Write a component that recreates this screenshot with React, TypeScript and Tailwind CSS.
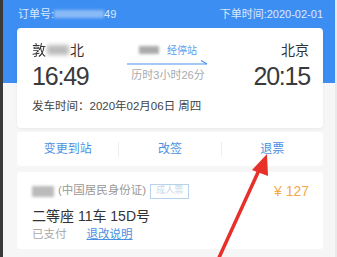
import React from "react";

const font = { fontFamily: '"Liberation Sans", "Noto Sans CJK SC", sans-serif' };

export default function App() {
  return (
    <div className="relative w-[337px] h-[257px] overflow-hidden flex bg-[#f6f6f6]" style={font}>
      <div className="w-[3px] h-full bg-[#3a3a3a]" />
      <div className="w-[332px] h-full pl-[14px] pr-[12px] bg-[linear-gradient(#3d8ef2_83px,#f6f6f6_83px)]">
        {/* header */}
        <div className="h-[28px] flex items-center justify-between text-[11px] text-white/80 pl-[1px]">
          <div className="flex items-center">
            <span>订单号:</span>
            <span className="inline-block w-[50px] h-[8px] bg-white/40 blur-[1.5px]" />
            <span>49</span>
          </div>
          <span>下单时间:2020-02-01</span>
        </div>
        {/* train card */}
        <div className="h-[100px] bg-white rounded-[4px] shadow-[0_1px_3px_rgba(0,0,0,0.06)] pl-[15px] pr-[13px] pt-[13px] flex flex-col">
          <div className="flex justify-between items-start">
            <div className="flex flex-col">
              <div className="h-[18px] flex items-center text-[14px] text-[#333]">
                <span className="blur-[0.6px]">敦</span>
                <span className="inline-block w-[22px] h-[10px] bg-[#bbb] blur-[2px] mx-[1px]" />
                <span>北</span>
              </div>
              <div className="text-[25px] leading-[26px] tracking-[-1.2px] text-[#3a3a3a] mt-[4px]">16:49</div>
            </div>
            <div className="flex flex-col items-center w-[84px] mr-[6px] mt-[1px]">
              <div className="h-[16px] flex items-center gap-[8px]">
                <span className="inline-block w-[20px] h-[8px] bg-[#aaa] blur-[1.5px]" />
                <span className="text-[10px] text-[#5aa0f0]">经停站</span>
              </div>
              <svg width="82" height="6" viewBox="0 0 82 6" className="mt-[1px]">
                <line x1="0" y1="5" x2="80" y2="5" stroke="#4a93ee" strokeWidth="1.2" />
                <line x1="74" y1="1.5" x2="80" y2="5" stroke="#4a93ee" strokeWidth="1.2" />
              </svg>
              <div className="text-[11px] text-[#aaa] mt-[2px]">历时3小时26分</div>
            </div>
            <div className="flex flex-col items-end">
              <div className="h-[18px] flex items-center text-[14px] text-[#333] pr-[1px]">北京</div>
              <div className="text-[25px] leading-[26px] tracking-[-1.2px] text-[#3a3a3a] mt-[4px]">20:15</div>
            </div>
          </div>
          <div className="text-[11.5px] text-[#444] mt-[9px]">发车时间：2020年02月06日 周四</div>
        </div>
        {/* actions */}
        <div className="mt-[4px] h-[34px] bg-white rounded-[3px] flex items-center text-[12px] text-[#4a90e2]">
          <div className="flex-1 text-center">变更到站</div>
          <div className="w-px h-[15px] bg-[#eee]" />
          <div className="flex-1 text-center">改签</div>
          <div className="w-px h-[15px] bg-[#eee]" />
          <div className="flex-1 text-center">退票</div>
        </div>
        {/* passenger */}
        <div className="mt-[6px] h-[77px] bg-white rounded-[3px] pl-[15px] pr-[14px] pt-[11px]">
          <div className="flex items-center justify-between h-[16px]">
            <div className="flex items-center">
              <span className="inline-block w-[22px] h-[11px] bg-[#bbb] blur-[1.5px]" />
              <span className="text-[11.5px] text-[#999] ml-[4px]">(中国居民身份证)</span>
              <span className="ml-[4px] h-[15px] px-[5px] border border-[#b8d2ee] text-[9px] text-[#c8d8ea] flex items-center">成人票</span>
            </div>
            <span className="text-[14px] text-[#f5a94a]">¥ 127</span>
          </div>
          <div className="mt-[8px] text-[14px] text-[#333] leading-[18px]">二等座 11车 15D号</div>
          <div className="mt-[1px] flex items-center text-[11.5px]">
            <span className="text-[#aaa]">已支付</span>
            <span className="ml-[20px] text-[#4a90e2] underline">退改说明</span>
          </div>
        </div>
      </div>
      <div className="w-[2px] h-full bg-[#eaeaea]" />
      <svg className="absolute left-0 top-0 pointer-events-none" width="337" height="257" viewBox="0 0 337 257">
        <line x1="217" y1="262" x2="260" y2="168" stroke="#e8302a" strokeWidth="3.5" strokeLinecap="round" />
        <polygon points="267,154 252,170 268,176" fill="#e8302a" />
      </svg>
    </div>
  );
}
